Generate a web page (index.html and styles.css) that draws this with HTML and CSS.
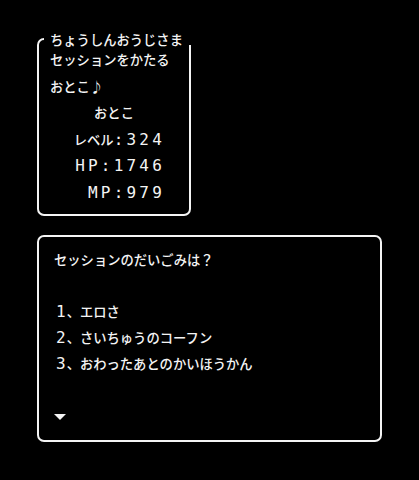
FILE: index.html
```html
<!DOCTYPE html>
<html>
  <head>
    <title>ちょうしんおうじさま</title>
    <link rel="stylesheet" href="styles.css">
  </head>
  <body>
    <div class="screen">
      <div class="status-box">
        <div class="status-title">ちょうしんおうじさま</div>
        <div class="line msg">セッションをかたる</div>
        <div class="line msg">おとこ♪</div>
        <div class="line name">おとこ</div>
        <div class="line stat">レベル<span class="num">:324</span></div>
        <div class="line stat"><span class="num">HP:1746</span></div>
        <div class="line stat"><span class="num">MP:979</span></div>
      </div>

      <div class="talk-box">
        <div class="line">セッションのだいごみは?</div>
        <div class="line"></div>
        <div class="line"><span class="num">1</span>、エロさ</div>
        <div class="line"><span class="num">2</span>、さいちゅうのコーフン</div>
        <div class="line"><span class="num">3</span>、おわったあとのかいほうかん</div>
        <div class="line"></div>
        <div class="line"><span class="next"></span></div>
      </div>
    </div>
  </body>
</html>
```

FILE: styles.css
```css
html,
body {
  margin: 0;
  background-color: #000;
}
body {
  font-family: "Noto Sans CJK JP", "Noto Sans", sans-serif;
  font-size: 13.3px;
  font-weight: 500;
  font-feature-settings: "fwid" 1;
  color: #f4f4f4;
}
.screen {
  padding: 38px 0 0 37px;
}
.num {
  font-family: "DejaVu Sans Mono", monospace;
  font-size: 16px;
  font-weight: normal;
  letter-spacing: 3.2px;
}
.status-box {
  position: relative;
  box-sizing: border-box;
  width: 154px;
  padding: 7px 0 7px;
  border: 2px solid #f4f4f4;
  border-radius: 7px;
}
.status-title {
  position: absolute;
  top: -9px;
  left: 5px;
  right: -4px;
  height: 14px;
  padding-left: 6px;
  line-height: 18px;
  background-color: #000;
  white-space: nowrap;
}
.status-box .line {
  height: 26.6px;
  line-height: 26.6px;
  white-space: nowrap;
}
.msg {
  padding-left: 11px;
}
.name {
  text-align: center;
}
.stat {
  text-align: right;
  padding-right: 24px;
}
.talk-box {
  box-sizing: border-box;
  width: 345px;
  margin-top: 19px;
  padding: 10px 15px 11px;
  border: 2px solid #f4f4f4;
  border-radius: 7px;
}
.talk-box .line {
  height: 26px;
  line-height: 26px;
  white-space: nowrap;
}
.talk-box .num {
  padding-left: 2px;
  letter-spacing: 1px;
}
.next {
  display: inline-block;
  width: 0;
  height: 0;
  margin-top: 11px;
  vertical-align: top;
  border-left: 6px solid transparent;
  border-right: 6px solid transparent;
  border-top: 6px solid #f4f4f4;
}
```
